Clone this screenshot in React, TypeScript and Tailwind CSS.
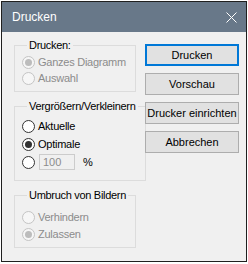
import React from 'react';

function Radio({ label, checked, disabled }: { label?: string; checked?: boolean; disabled?: boolean }) {
  return (
    <div className="h-[16px] flex items-center gap-[3px]">
      <span
        className={`w-[13px] h-[13px] rounded-full border flex items-center justify-center shrink-0 ${
          disabled ? 'border-[#c4c4c4] bg-[#f6f6f6]' : 'border-[#333333] bg-white'
        }`}
      >
        {checked && (
          <span className={`w-[7px] h-[7px] rounded-full ${disabled ? 'bg-[#bcbcbc]' : 'bg-[#333333]'}`}></span>
        )}
      </span>
      {label && (
        <span className={`text-[11px] leading-[13px] tracking-[-0.25px] ${disabled ? 'text-[#8c8c8c]' : 'text-black'}`}>
          {label}
        </span>
      )}
    </div>
  );
}

function Group({ title, children, className }: { title: string; children: React.ReactNode; className: string }) {
  return (
    <fieldset className={`border border-[#dcdcdc] px-[7px] ${className}`}>
      <legend className="ml-[5px] px-[2px] text-[11px] leading-[13px] tracking-[-0.3px] text-black">{title}</legend>
      {children}
    </fieldset>
  );
}

function Button({ label, primary }: { label: string; primary?: boolean }) {
  return (
    <button
      className={`w-[94px] h-[22px] bg-[#e1e1e1] text-[11px] text-black flex items-center justify-center ${
        primary ? 'border-2 border-[#0078d7]' : 'border border-[#adadad]'
      }`}
    >
      {label}
    </button>
  );
}

export default function App() {
  return (
    <div className="w-[248px] h-[264px] bg-white pt-px pl-px font-['Liberation_Sans',Arial,sans-serif]">
      <div className="w-[246px] h-[261px] border border-[#1f1f1f] bg-[#f0f0f0] flex flex-col">
        <div className="h-[30px] bg-[#687889] flex items-center justify-between pl-[10px] pr-[9px]">
          <span className="text-white text-[12px] leading-[14px]">Drucken</span>
          <svg width="11" height="11" viewBox="0 0 11 11">
            <path d="M0.5 0.5 L10.5 10.5 M10.5 0.5 L0.5 10.5" stroke="white" strokeWidth="1" />
          </svg>
        </div>

        <div className="flex gap-[9px] pl-[12px]">
          <div className="w-[122px] flex flex-col gap-[8px] pt-[7px]">
            <Group title="Drucken:" className="pt-[2px] pb-[5px]">
              <Radio label="Ganzes Diagramm" checked disabled />
              <Radio label="Auswahl" disabled />
            </Group>

            <Group title="Vergrößern/Verkleinern" className="pt-[5px] pb-[10px]">
              <div className="flex flex-col gap-[2px]">
                <Radio label="Aktuelle" />
                <Radio label="Optimale" checked />
                <div className="flex items-center h-[16px]">
                  <Radio />
                  <div className="ml-[4px] w-[36px] h-[16px] border border-[#cccccc] bg-[#f0f0f0] pl-[3px] text-[11px] leading-[14px] text-[#8c8c8c]">
                    100
                  </div>
                  <span className="ml-[8px] text-[11px] text-black">%</span>
                </div>
              </div>
            </Group>

            <Group title="Umbruch von Bildern" className="pt-[7px] pb-[5px]">
              <div className="flex flex-col gap-[1px]">
                <Radio label="Verhindern" disabled />
                <Radio label="Zulassen" checked disabled />
              </div>
            </Group>
          </div>

          <div className="flex flex-col gap-[7px] pt-[12px]">
            <Button label="Drucken" primary />
            <Button label="Vorschau" />
            <Button label="Drucker einrichten" />
            <Button label="Abbrechen" />
          </div>
        </div>
      </div>
    </div>
  );
}
